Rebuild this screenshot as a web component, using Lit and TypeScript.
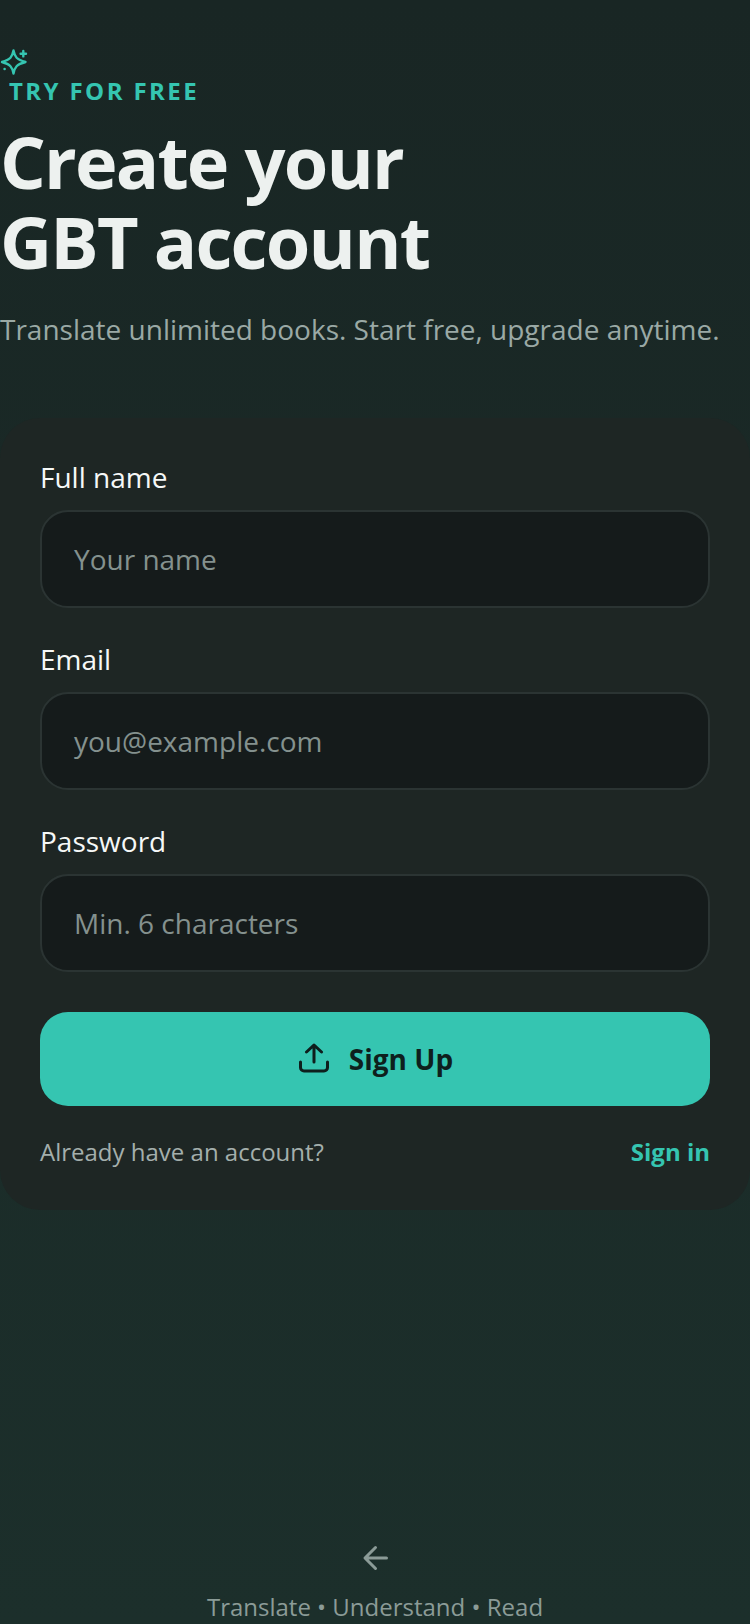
import { LitElement, html, css } from "lit";
import { customElement } from "lit/decorators.js";

@customElement("app-root")
export class AppRoot extends LitElement {
  static styles = css`
    :host {
      display: flex;
      flex-direction: column;
      width: 750px;
      height: 1624px;
      overflow: hidden;
      background: linear-gradient(180deg, #192624 0%, #1c2f2b 100%);
      font-family: "Open Sans", sans-serif;
      color: #fff;
    }
    .head { padding-top: 46px; }
    .spark { display: block; width: 30px; height: 30px; color: #35c5b1; }
    .eyebrow {
      margin: 0 0 0 9px;
      font-size: 24px;
      line-height: 30px;
      font-weight: 700;
      letter-spacing: 2.4px;
      color: #35c5b1;
    }
    h1 {
      margin: 15px 0 0;
      font-size: 72px;
      line-height: 80px;
      font-weight: 700;
      letter-spacing: -1.8px;
      color: #edf1ef;
    }
    .sub {
      margin: 26px 0 0;
      font-size: 28px;
      line-height: 44px;
      color: #9aa9a5;
      white-space: nowrap;
    }
    .card {
      margin-top: 67px;
      padding: 40px 40px 39px;
      background: #1e2624;
      border-radius: 40px;
      display: flex;
      flex-direction: column;
      gap: 32px;
    }
    .field { display: flex; flex-direction: column; gap: 14px; }
    label { font-size: 28px; line-height: 38px; color: #f6f8f7; }
    .input {
      box-sizing: border-box;
      height: 98px;
      padding: 0 32px;
      display: flex;
      align-items: center;
      background: #151b1b;
      border: 2px solid #2b3433;
      border-radius: 28px;
      font-size: 28px;
      color: #84918e;
    }
    .btn {
      margin-top: 8px;
      height: 94px;
      display: flex;
      align-items: center;
      justify-content: center;
      gap: 20px;
      background: #35c5b1;
      border-radius: 28px;
      font-size: 28px;
      font-weight: 700;
      color: #0e1f1d;
    }
    .btn svg { width: 32px; height: 32px; }
    .foot {
      margin-top: -5px;
      display: flex;
      justify-content: space-between;
      align-items: center;
      font-size: 24px;
      line-height: 38px;
      color: #a4afac;
    }
    .foot b { font-weight: 700; color: #35c5b1; }
    .bottom {
      margin-top: auto;
      display: flex;
      flex-direction: column;
      align-items: center;
      gap: 17px;
      color: #8b9b97;
      font-size: 24px;
      line-height: 34px;
    }
    .bottom svg { width: 30px; height: 30px; flex: none; }
  `;

  render() {
    return html`
      <div class="head">
        <svg class="spark" viewBox="0 0 30 30" fill="none" stroke="currentColor" stroke-width="2.4" stroke-linejoin="round" stroke-linecap="round">
          <path d="M13.5 4.5 C14.8 11 16.5 13.5 25.5 16 C16.5 18.5 14.8 21 13.5 27.5 C12.2 21 10.5 18.5 2 16 C10.5 13.5 12.2 11 13.5 4.5 Z" />
          <path d="M23.3 5v5.4M20.6 7.7h5.4" />
          <circle cx="4.6" cy="23" r="1.3" fill="currentColor" stroke="none" />
        </svg>
        <p class="eyebrow">TRY FOR FREE</p>
        <h1>Create your<br />GBT account</h1>
        <p class="sub">Translate unlimited books. Start free, upgrade anytime.</p>
      </div>
      <div class="card">
        <div class="field"><label>Full name</label><div class="input">Your name</div></div>
        <div class="field"><label>Email</label><div class="input">you@example.com</div></div>
        <div class="field"><label>Password</label><div class="input">Min. 6 characters</div></div>
        <div class="btn">
          <svg viewBox="0 0 32 32" fill="none" stroke="currentColor" stroke-width="3" stroke-linecap="round" stroke-linejoin="round">
            <path d="M17 19V2M9.5 9 17 2l7.5 7" />
            <path d="M3.5 19v5.5a3.5 3.5 0 0 0 3.5 3.5h20a3.5 3.5 0 0 0 3.5-3.5V19" />
          </svg>
          <span>Sign Up</span>
        </div>
        <div class="foot"><span>Already have an account?</span><b>Sign in</b></div>
      </div>
      <div class="bottom">
        <svg viewBox="0 0 30 30" fill="none" stroke="currentColor" stroke-width="3" stroke-linecap="round" stroke-linejoin="round">
          <path d="M26.5 15H5.5M15.5 4.5 5 15l10.5 10.5" />
        </svg>
        <span>Translate • Understand • Read</span>
      </div>
    `;
  }
}
